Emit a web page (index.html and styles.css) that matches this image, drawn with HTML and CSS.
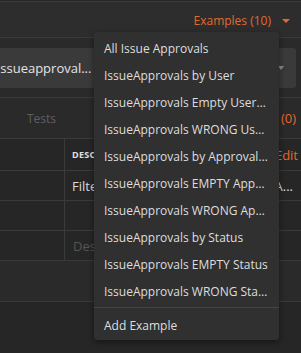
FILE: index.html
```html
<!DOCTYPE html>
<html lang="en">
<head>
    <meta charset="UTF-8">
    <meta name="viewport" content="width=device-width, initial-scale=1.0">
    <title>Examples</title>
    <link rel="stylesheet" href="styles.css">
</head>
<body>
    <div class="topbar">
        <span class="examples-link">Examples (10)</span>
        <span class="caret"></span>
    </div>

    <div class="url-row">
        <div class="url-box">
            <span class="url-text">issueapproval...</span>
            <span class="url-caret"></span>
        </div>
    </div>

    <div class="tabs">
        <span class="tab">Tests</span>
        <span class="tab-count">(0)</span>
    </div>

    <div class="table">
        <div class="row head">
            <div class="cell key"></div>
            <div class="cell desc"><span class="head-label">DESCRIPTION</span></div>
            <div class="cell action"><span class="bulk">Bulk Edit</span></div>
        </div>
        <div class="row">
            <div class="cell key"></div>
            <div class="cell desc">Filter by user</div>
            <div class="cell action"><span class="val">A...</span></div>
        </div>
        <div class="row">
            <div class="cell key"></div>
            <div class="cell desc"></div>
            <div class="cell action"></div>
        </div>
        <div class="row">
            <div class="cell key"></div>
            <div class="cell desc"><span class="placeholder">Description</span></div>
            <div class="cell action"></div>
        </div>
        <div class="row tall"></div>
    </div>

    <!-- Examples dropdown -->
    <div class="menu">
        <div class="menu-item">All Issue Approvals</div>
        <div class="menu-item">IssueApprovals by User</div>
        <div class="menu-item">IssueApprovals Empty UserWorkflow</div>
        <div class="menu-item">IssueApprovals WRONG User Filter</div>
        <div class="menu-item">IssueApprovals by Approval Status</div>
        <div class="menu-item">IssueApprovals EMPTY Approval</div>
        <div class="menu-item">IssueApprovals WRONG Approval</div>
        <div class="menu-item">IssueApprovals by Status</div>
        <div class="menu-item">IssueApprovals EMPTY Status</div>
        <div class="menu-item">IssueApprovals WRONG Status Filter</div>
        <div class="menu-divider"></div>
        <div class="menu-item">Add Example</div>
    </div>
</body>
</html>
```

FILE: styles.css
```css
body {
    margin: 0;
    padding-top: 1px;
    background-color: #262626;
    font-family: "Open Sans", "Liberation Sans", sans-serif;
    width: 301px;
    height: 353px;
    overflow: hidden;
    position: relative;
}
.topbar {
    height: 35px;
    border-top: 1px solid #3c3c3c;
    border-bottom: 1px solid #3a3a3a;
    background-color: #2d2d2d;
    display: flex;
    align-items: center;
    justify-content: flex-end;
    padding-right: 11px;
}
.examples-link {
    color: #e2692f;
    font-size: 12px;
    margin-top: 1px;
}
.caret {
    width: 0;
    height: 0;
    border-left: 4px solid transparent;
    border-right: 4px solid transparent;
    border-top: 4px solid #e2692f;
    margin-left: 11px;
    margin-top: 2px;
}
.url-row {
    background-color: #2a2a2a;
    padding: 10px 5px 9px 0;
    margin-left: -8px;
    border-bottom: 1px solid #3a3a3a;
}
.url-box {
    height: 40px;
    background-color: #3a3a3a;
    border-radius: 3px;
    display: flex;
    align-items: center;
    justify-content: space-between;
    padding: 0 12px 0 5px;
}
.url-text {
    color: #e4e4e4;
    font-size: 13px;
}
.url-caret {
    width: 0;
    height: 0;
    border-left: 3px solid transparent;
    border-right: 3px solid transparent;
    border-top: 4px solid #8a8a8a;
}
.tabs {
    height: 40px;
    background-color: #2a2a2a;
    display: flex;
    align-items: center;
    justify-content: space-between;
    padding: 0 5px 0 27px;
}
.tab {
    color: #5f5f5f;
    font-size: 12px;
}
.tab-count {
    color: #e2692f;
    font-size: 13px;
}
.table {
    border-top: 1px solid #3a3a3a;
}
.row {
    display: flex;
    height: 29px;
    border-bottom: 1px solid #3a3a3a;
}
.row.head {
    height: 31px;
}
.row.tall {
    height: 40px;
    background-color: #2a2a2a;
}
.cell {
    display: flex;
    align-items: center;
    color: #dcdcdc;
    font-size: 13px;
    white-space: nowrap;
    overflow: hidden;
}
.cell.key {
    width: 64px;
    border-right: 1px solid #3a3a3a;
}
.cell.desc {
    flex: 1;
    padding-left: 7px;
}
.cell.action {
    width: 70px;
    justify-content: flex-end;
    padding-right: 3px;
}
.head-label {
    font-size: 9px;
    font-weight: bold;
    letter-spacing: 0.3px;
    color: #e0e0e0;
}
.bulk {
    color: #e2692f;
    font-size: 13px;
}
.val {
    padding-right: 5px;
}
.placeholder {
    color: #555;
    padding-left: 1px;
}
.menu {
    position: absolute;
    left: 94px;
    top: 32px;
    width: 185px;
    padding: 3px 0 1px;
    background-color: #303030;
    border-radius: 3px;
    box-shadow: 0 2px 6px rgba(0,0,0,0.45);
}
.menu-item {
    height: 27px;
    line-height: 27px;
    padding: 0 10px 0 10px;
    color: #dedede;
    font-size: 12px;
    white-space: nowrap;
    overflow: hidden;
    text-overflow: ellipsis;
}
.menu-divider {
    height: 1px;
    margin: 2px 0 4px;
    background-color: #444;
}
```
